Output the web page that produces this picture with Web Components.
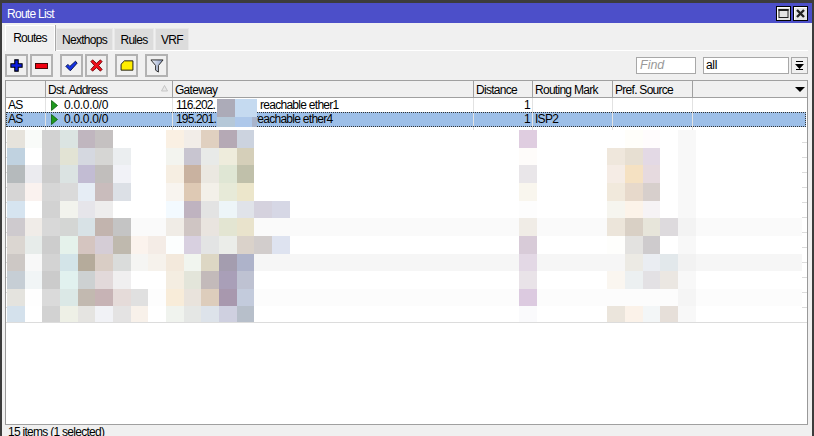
<!DOCTYPE html>
<html>
<head>
<meta charset="utf-8">
<title>Route List</title>
<style>
  html, body { margin: 0; height: 436px; overflow: hidden; background: #f0f0f0; }
  body { font: 12px "Liberation Sans", Arial, sans-serif; letter-spacing: -0.72px; color: #000; }
</style>
</head>
<body>
<route-window label="Route List">
  <tab-strip slot="tabs" tabs="Routes,Nexthops,Rules,VRF" active="Routes"></tab-strip>
  <tool-bar slot="tools"></tool-bar>
  <route-table slot="table"></route-table>
  <span slot="status">15 items (1 selected)</span>
</route-window>

<script>
// window frame, title bar + slots for the rest
const windowTemplate = document.createElement("template");
windowTemplate.innerHTML = `
  <style>
    :host { display: flex; flex-direction: column; height: 436px; box-sizing: border-box; background: #f0f0f0;
      border-left: 2px solid #3c3c3c; border-right: 2px solid #3c3c3c; border-top: 3px solid #3c3c3c; overflow: hidden; }
    .title { flex: none; height: 20px; display: flex; align-items: center; justify-content: space-between;
      background: #4c4fc9; color: #fff; padding: 0 4px 0 5px; }
    .label { padding-top: 1px; }
    .winbtns { display: flex; gap: 2px; }
    .winbtn { width: 15px; height: 15px; box-sizing: border-box; background: #e4e4e4; border: 1px solid #000;
      box-shadow: inset 1px 1px 0 #fff; display: flex; align-items: center; justify-content: center; }
    .body { flex: 1; min-height: 0; display: flex; flex-direction: column; padding: 2px 4px 0 3px; }
    .panel { border-top: 1px solid #fff; flex: 1; min-height: 0; display: flex; flex-direction: column; }
    .status { flex: none; height: 12px; box-sizing: border-box; padding: 1px 0 0 3px; line-height: 13px; overflow: hidden; white-space: nowrap; border-top: 1px solid #a0a0a0; }
  </style>
  <div class="title">
    <span class="label"></span>
    <span class="winbtns">
      <span class="winbtn"><svg width="11" height="11" viewBox="0 0 11 11"><rect x="1" y="1.500" width="9" height="8" fill="none" stroke="#222" stroke-width="1"/><rect x="0.5" y="1" width="10" height="2" fill="#222"/></svg></span>
      <span class="winbtn"><svg width="11" height="11" viewBox="0 0 11 11"><path d="M2 2 9 9M9 2 2 9" stroke="#222" stroke-width="2.400"/></svg></span>
    </span>
  </div>
  <div class="body">
    <slot name="tabs"></slot>
    <div class="panel">
      <slot name="tools"></slot>
      <slot name="table"></slot>
    </div>
    <div class="status"><slot name="status"></slot></div>
  </div>
`;
class RouteWindow extends HTMLElement {
  constructor() {
    super();
    this.attachShadow({ mode: "open" });
    this.shadowRoot.appendChild(windowTemplate.content.cloneNode(true));
    this.shadowRoot.querySelector(".label").textContent = this.getAttribute("label");
  }
}
customElements.define("route-window", RouteWindow);

// tabs
class TabStrip extends HTMLElement {
  constructor() {
    super();
    this.attachShadow({ mode: "open" });
    const widths = { Routes: 50, Nexthops: 57, Rules: 40, VRF: 34 };
    const active = this.getAttribute("active");
    const tabs = this.getAttribute("tabs").split(",").map(name => {
      const cls = name === active ? "tab on" : "tab";
      return `<span class="${cls}" style="width:${widths[name]}px">${name}</span>`;
    }).join("");
    this.shadowRoot.innerHTML = `
      <style>
        :host { display: flex; height: 25px; align-items: flex-end; gap: 1px; box-sizing: border-box; flex: none; }
        .tab { box-sizing: border-box; height: 22px; padding-top: 1px; background: #dcdcdc; border: 1px solid #e8e8e8; border-bottom: 0;
          display: flex; align-items: center; justify-content: center; }
        .tab.on { height: 26px; padding: 0 0 2px; background: #f0f0f0; border: 1px solid #fff; border-bottom: 0; margin-bottom: -1px; position: relative; box-shadow: 1px 0 0 #a8a8a8; }
      </style>
      ${tabs}`;
  }
}
customElements.define("tab-strip", TabStrip);

// one square toolbar button, icon goes in the slot
class ToolButton extends HTMLElement {
  constructor() {
    super();
    this.attachShadow({ mode: "open" });
    this.shadowRoot.innerHTML = `
      <style>
        :host { display: flex; width: 23px; height: 23px; box-sizing: border-box; flex: none; align-items: center; justify-content: center;
          background: #f0f0f0; border: 2px solid #b2b2b2; }
      </style>
      <slot></slot>`;
  }
}
customElements.define("tool-button", ToolButton);

// toolbar row, with the find fields on the right
const toolsTemplate = document.createElement("template");
toolsTemplate.innerHTML = `
  <style>
    :host { display: flex; height: 29px; flex: none; align-items: flex-start; padding-top: 3px; box-sizing: border-box; }
    .group { display: flex; gap: 2px; margin-right: 7px; }
    .spring { flex: 1; }
    .field { box-sizing: border-box; height: 17px; background: #fff; border: 1px solid #a8a8a8; line-height: 15px; padding-left: 2px; margin-top: 3px; }
    .find { width: 60px; color: #9a9a9a; font-style: italic; font-size: 12.500px; margin-right: 7px; padding-left: 3px; letter-spacing: 0; }
    .all { width: 86px; margin-right: 2px; letter-spacing: -0.3px; }
    .drop { box-sizing: border-box; width: 17px; height: 17px; margin-top: 3px; background: #f0f0f0; border: 1px solid #a8a8a8; display: flex; align-items: center; justify-content: center; }
  </style>
  <div class="group">
    <tool-button><svg width="13" height="13" viewBox="0 0 15 15"><path d="M5.500 1h4v4.500H14v4H9.500V14h-4V9.500H1v-4h4.500z" fill="#0b1ce0" stroke="#000" stroke-width="1.200"/></svg></tool-button>
    <tool-button><svg width="13" height="6" viewBox="0 0 13 6"><rect x=".5" y=".5" width="12" height="5" fill="#f00010" stroke="#4a0808" stroke-width="1"/></svg></tool-button>
  </div>
  <div class="group">
    <tool-button><svg width="13" height="12" viewBox="0 0 16 15"><path d="M1 8 3.500 5.500 6 8 13 1.500 15 4 6.500 13.500z" fill="#1232e6" stroke="#04104c" stroke-width="1.200"/></svg></tool-button>
    <tool-button><svg width="13" height="13" viewBox="0 0 15 15"><path d="M1 3 3 1 7.500 5 12 1 14 3 10 7.500 14 12 12 14 7.500 10 3 14 1 12 5 7.500z" fill="#f0101c" stroke="#6a0408" stroke-width="1"/></svg></tool-button>
  </div>
  <div class="group">
    <tool-button><svg width="14" height="11" viewBox="0 0 15 13"><path d="M4.500 1H14.500V12H.5V5z" fill="#ffee00" stroke="#111" stroke-width="1.100"/></svg></tool-button>
  </div>
  <div class="group">
    <tool-button><svg width="14" height="16" viewBox="0 0 15 16"><defs><linearGradient id="fun" x1="0" x2="1"><stop offset="0" stop-color="#f4f6fb"/><stop offset="1" stop-color="#8ea0c8"/></linearGradient></defs><path d="M1 1.500H14L9 7.500V14.500L6 12.500V7.500z" fill="url(#fun)" stroke="#222" stroke-width="1"/></svg></tool-button>
  </div>
  <div class="spring"></div>
  <div class="field find">Find</div>
  <div class="field all">all</div>
  <div class="drop"><svg width="9" height="9" viewBox="0 0 9 9"><path d="M1 0h7v1H1zM0 3h9L4.500 8zM1 8h7v1H1z" fill="#000"/></svg></div>
`;
class ToolBar extends HTMLElement {
  constructor() {
    super();
    this.attachShadow({ mode: "open" });
    this.shadowRoot.appendChild(toolsTemplate.content.cloneNode(true));
  }
}
customElements.define("tool-bar", ToolBar);

// the blurred out rows, as data: [band colour, left cells, {column: colour}]
const MOSAIC_ROWS = [
  ["#fff", "e6e3dc f9fbf9 d2d2d2 dbe4e2 c0b6bf c5c1c1 - - - faf0e3 f2ede8 e0d0c0 b5a9b5 ccd3df", { 29: "dfcde0", 35: "fffefa", 36: "fffcfd", 38: "f8f8f8" }],
  ["#fff", "c0d2e0 - d2d2d2 e2e3d4 d5d8e0 d6d6d4 ebeef0 - - f3f4ef c8c5d0 e8eae8 eeecdc d5cfb9", { 29: "fefcfa", 34: "efe7dc", 35: "e7dfd2", 36: "e3d9e5", 38: "f8f8f8" }],
  ["#fff", "b5babc ebebef cccccc dbe3e2 c2bcd3 c1bebc f1f2f7 - - f6eee2 c9b2a0 ebe8e1 dfe6d4 c0c0aa", { 29: "e9e6e9", 34: "f5ece5", 35: "f5e1c2", 36: "e6dadf", 38: "f8f8f8" }],
  ["#fff", "d6d5d5 faf2ef d6d6d6 dadada e6edf5 c9bcbc dce0e6 - - f8f4ef dec9b4 f3f0e9 e7ead8 ece6cb", { 29: "f9f6ee", 34: "f1e9dc", 35: "e7d9cb", 36: "d7cfcc", 38: "f8f8f8" }],
  ["#fff", "d6e4f0 - d2d2d2 f2f3ed e6e5ea eeeded - - - f3faff bfb3c0 e3e3e3 edf5f8 e0e3e9 d5d2de d6d7e5", { 29: "fdfdfd", 34: "f6f5ef", 35: "fcf3e9", 36: "f6f3f5", 38: "f8f8f8" }],
  ["#fafafa", "cecace f0ece8 d8d8d8 d4d6d4 d8e2e6 c2b4ae c4c4c4 - - f0ece6 cfc5c3 e9e4df e3e5d2 e9e3cc", { 29: "f0ece6", 34: "ece5da", 35: "d9d0c5", 36: "e7e5da", 37: "dddadd", 38: "f3f3f3" }],
  ["#fff", "dbd6d1 e7ecea cdcdcd e5f2eb d5c5c0 d5cdd6 bfb9ae fbf3ed f4ece6 fcfefe d8d0e0 e3e4e4 ebede9 dad2ca d2cdcc dee3f0", { 29: "d8cbd8", 34: "fefefc", 35: "e3e2e0", 36: "cecbcd", 38: "f8f8f8" }],
  ["#f6f6f6", "cdc8c5 f8f8f8 d3d3d3 d3e4e8 b5ab9b d9cdc5 dadcdb f5f5f3 f6f2ec f3e9dc f1f5ef ddd7c4 a49daf aeb3ca", { 29: "e3d8e5", 35: "eceae4", 36: "eaedf2", 37: "e2e8eb", 38: "f2f2f2" }],
  ["#fff", "c6ced5 f1f5f6 cbcbcb e1f1ef cdd1d2 e2d9da f0eff0 - - f4ede1 e3e5da c3baba a99fb8 bec2d2", { 29: "e9e3e8", 34: "faf6f0", 35: "ecf0f1", 36: "e3e1e4", 37: "ebe7e2", 38: "f8f8f8" }],
  ["#fcfcfc", "e4e3de fefefe dadada dbe8e6 c2b9b0 c7b3b5 e5dbd9 e0e0e0 fdfdfd f8ecd9 e9e3dc ddcdbc a898ae c3cbdc", { 29: "dccae0", 38: "f5f5f5" }],
  ["#fff", "d4e1ec - d2d2d2 eef0e6 e5e4e1 f1f2f6 e4e3e3 f8f1ea - f0f3ee e5e7e5 dde3ea cfd0e0 b7bfca", { 29: "fafafc", 34: "ebe5dc", 35: "fbf2e9", 36: "f3f6f7", 37: "e6dfd9", 38: "f8f8f8" }]
];
const MOSAIC_HEIGHTS = [18, 17, 18, 18, 17, 18, 18, 17, 18, 17, 16];

class PixelMosaic extends HTMLElement {
  constructor() {
    super();
    this.attachShadow({ mode: "open" });
    const rows = MOSAIC_ROWS.map(([band, left, right], i) => {
      let cells = "";
      left.split(" ").forEach((c, col) => {
        if (c !== "-") cells += `<i style="grid-column:${col + 1};background:#${c}"></i>`;
      });
      for (const col in right) {
        cells += `<i style="grid-column:${+col + 1};background:#${right[col]}"></i>`;
      }
      return `<div class="row" style="height:${MOSAIC_HEIGHTS[i]}px;background:${band}">${cells}</div>`;
    }).join("");
    this.shadowRoot.innerHTML = `
      <style>
        :host { display: flex; flex: none; height: 193px; box-sizing: border-box; background: #fff; border-bottom: 1px solid #dcdcdc; }
        .ticks { width: 1px; flex: none; background: repeating-linear-gradient(#fff 0 12px, #dcdcdc 12px 13px, #fff 13px 15px); }
        .rows { width: 795px; flex: none; }
        .row { display: grid; grid-template-columns: repeat(45, 17.667px); }
        .row i { display: block; grid-row: 1; }
        .tail { flex: 1; background: repeating-linear-gradient(#fff 0 12px, #dcdcdc 12px 13px, #fff 13px 15px); }
      </style>
      <div class="ticks"></div>
      <div class="rows">${rows}</div>
      <div class="tail"></div>`;
  }
}
customElements.define("pixel-mosaic", PixelMosaic);

// route list
const tableTemplate = document.createElement("template");
tableTemplate.innerHTML = `
  <style>
    :host { display: flex; flex-direction: column; flex: 1; min-height: 0; box-sizing: border-box; background: #fff; position: relative;
      border-left: 1px solid #999; border-right: 1px solid #999; --cols: 40px 127px 301px 59px 80px 80px 1fr; }
    .grid { display: grid; grid-template-columns: var(--cols); flex: none; }
    .head { height: 18px; box-sizing: border-box; background: #f0f0f0; border-top: 1px solid #a0a0a0; border-bottom: 1px solid #a0a0a0; grid-template-rows: 16px; }
    .head span { border-right: 1px solid #a0a0a0; padding-left: 2px; line-height: 18px; box-sizing: border-box; position: relative; white-space: nowrap; overflow: hidden; }
    .head span:last-child { border-right: 0; }
    .sort { position: absolute; right: 4px; top: 4px; }
    .more { position: absolute; right: 2px; top: 6px; }
    .row { height: 15px; line-height: 15px; box-sizing: border-box; }
    .row.first { height: 14px; line-height: 14px; }
    .row span { border-right: 1px solid #e2e2e2; padding-left: 2px; box-sizing: border-box; white-space: nowrap; overflow: hidden; }
    .row span:last-child { border-right: 0; }
    .row .dst { padding-left: 5px; display: flex; align-items: center; gap: 6px; letter-spacing: -0.3px; }
    .row .gw { display: flex; padding-left: 3px; }
    .row .ip { width: 84px; flex: none; padding-left: 0; border-right: 0; letter-spacing: -0.85px; }
    .row .num { text-align: right; padding-right: 2px; }
    .row.sel { background: #9dbfe8; outline: 1px dotted #333; outline-offset: -1px; margin-right: 1px; }
    .gap { height: 3px; }
    .gap span { border-right: 1px solid #e2e2e2; }
    .gap span:last-child { border-right: 0; }
    .patch { position: absolute; left: 211px; top: 19px; width: 40px; display: grid; grid-template-columns: 18px 17px 5px; grid-template-rows: 18px 10px; }
    .patch i { display: block; }
    .rest { flex: 1; background: #fff; }
  </style>
  <div class="grid head">
    <span></span>
    <span>Dst. Address<svg class="sort" width="7" height="7" viewBox="0 0 7 7"><path d="M3.500 .5 6.500 6H.5z" fill="#e8e8e8" stroke="#bbb" stroke-width=".8"/></svg></span>
    <span>Gateway</span>
    <span>Distance</span>
    <span>Routing Mark</span>
    <span>Pref. Source</span>
    <span><svg class="more" width="10" height="5" viewBox="0 0 10 5"><path d="M0 0H10L5 5z" fill="#000"/></svg></span>
  </div>
  <div class="grid row first">
    <span>AS</span>
    <span class="dst"><svg width="7" height="11" viewBox="0 0 7 11"><path d="M.5.500 6.500 5.500.5 10.500z" fill="#1f9a1f" stroke="#0c5a0c" stroke-width=".8"/></svg>0.0.0.0/0</span>
    <span class="gw"><span class="ip">116.202.</span>reachable ether1</span>
    <span class="num">1</span>
    <span></span><span></span><span></span>
  </div>
  <div class="grid row sel">
    <span>AS</span>
    <span class="dst"><svg width="7" height="11" viewBox="0 0 7 11"><path d="M.5.500 6.500 5.500.5 10.500z" fill="#1f9a1f" stroke="#0c5a0c" stroke-width=".8"/></svg>0.0.0.0/0</span>
    <span class="gw"><span class="ip" style="width:78px">195.201.</span>reachable ether4</span>
    <span class="num">1</span>
    <span>ISP2</span>
    <span></span><span></span>
  </div>
  <div class="grid gap"><span></span><span></span><span></span><span></span><span></span><span></span><span></span></div>
  <pixel-mosaic></pixel-mosaic>
  <div class="rest"></div>
  <div class="patch">
    <i style="background:#acabb8"></i><i style="background:#c5daf0"></i><i style="background:#c5daf0"></i>
    <i style="background:#b5c8d8"></i><i style="background:#aec8ea"></i><i style="background:#a8b4cc"></i>
  </div>
`;
class RouteTable extends HTMLElement {
  constructor() {
    super();
    this.attachShadow({ mode: "open" });
    this.shadowRoot.appendChild(tableTemplate.content.cloneNode(true));
  }
}
customElements.define("route-table", RouteTable);
</script>
</body>
</html>
